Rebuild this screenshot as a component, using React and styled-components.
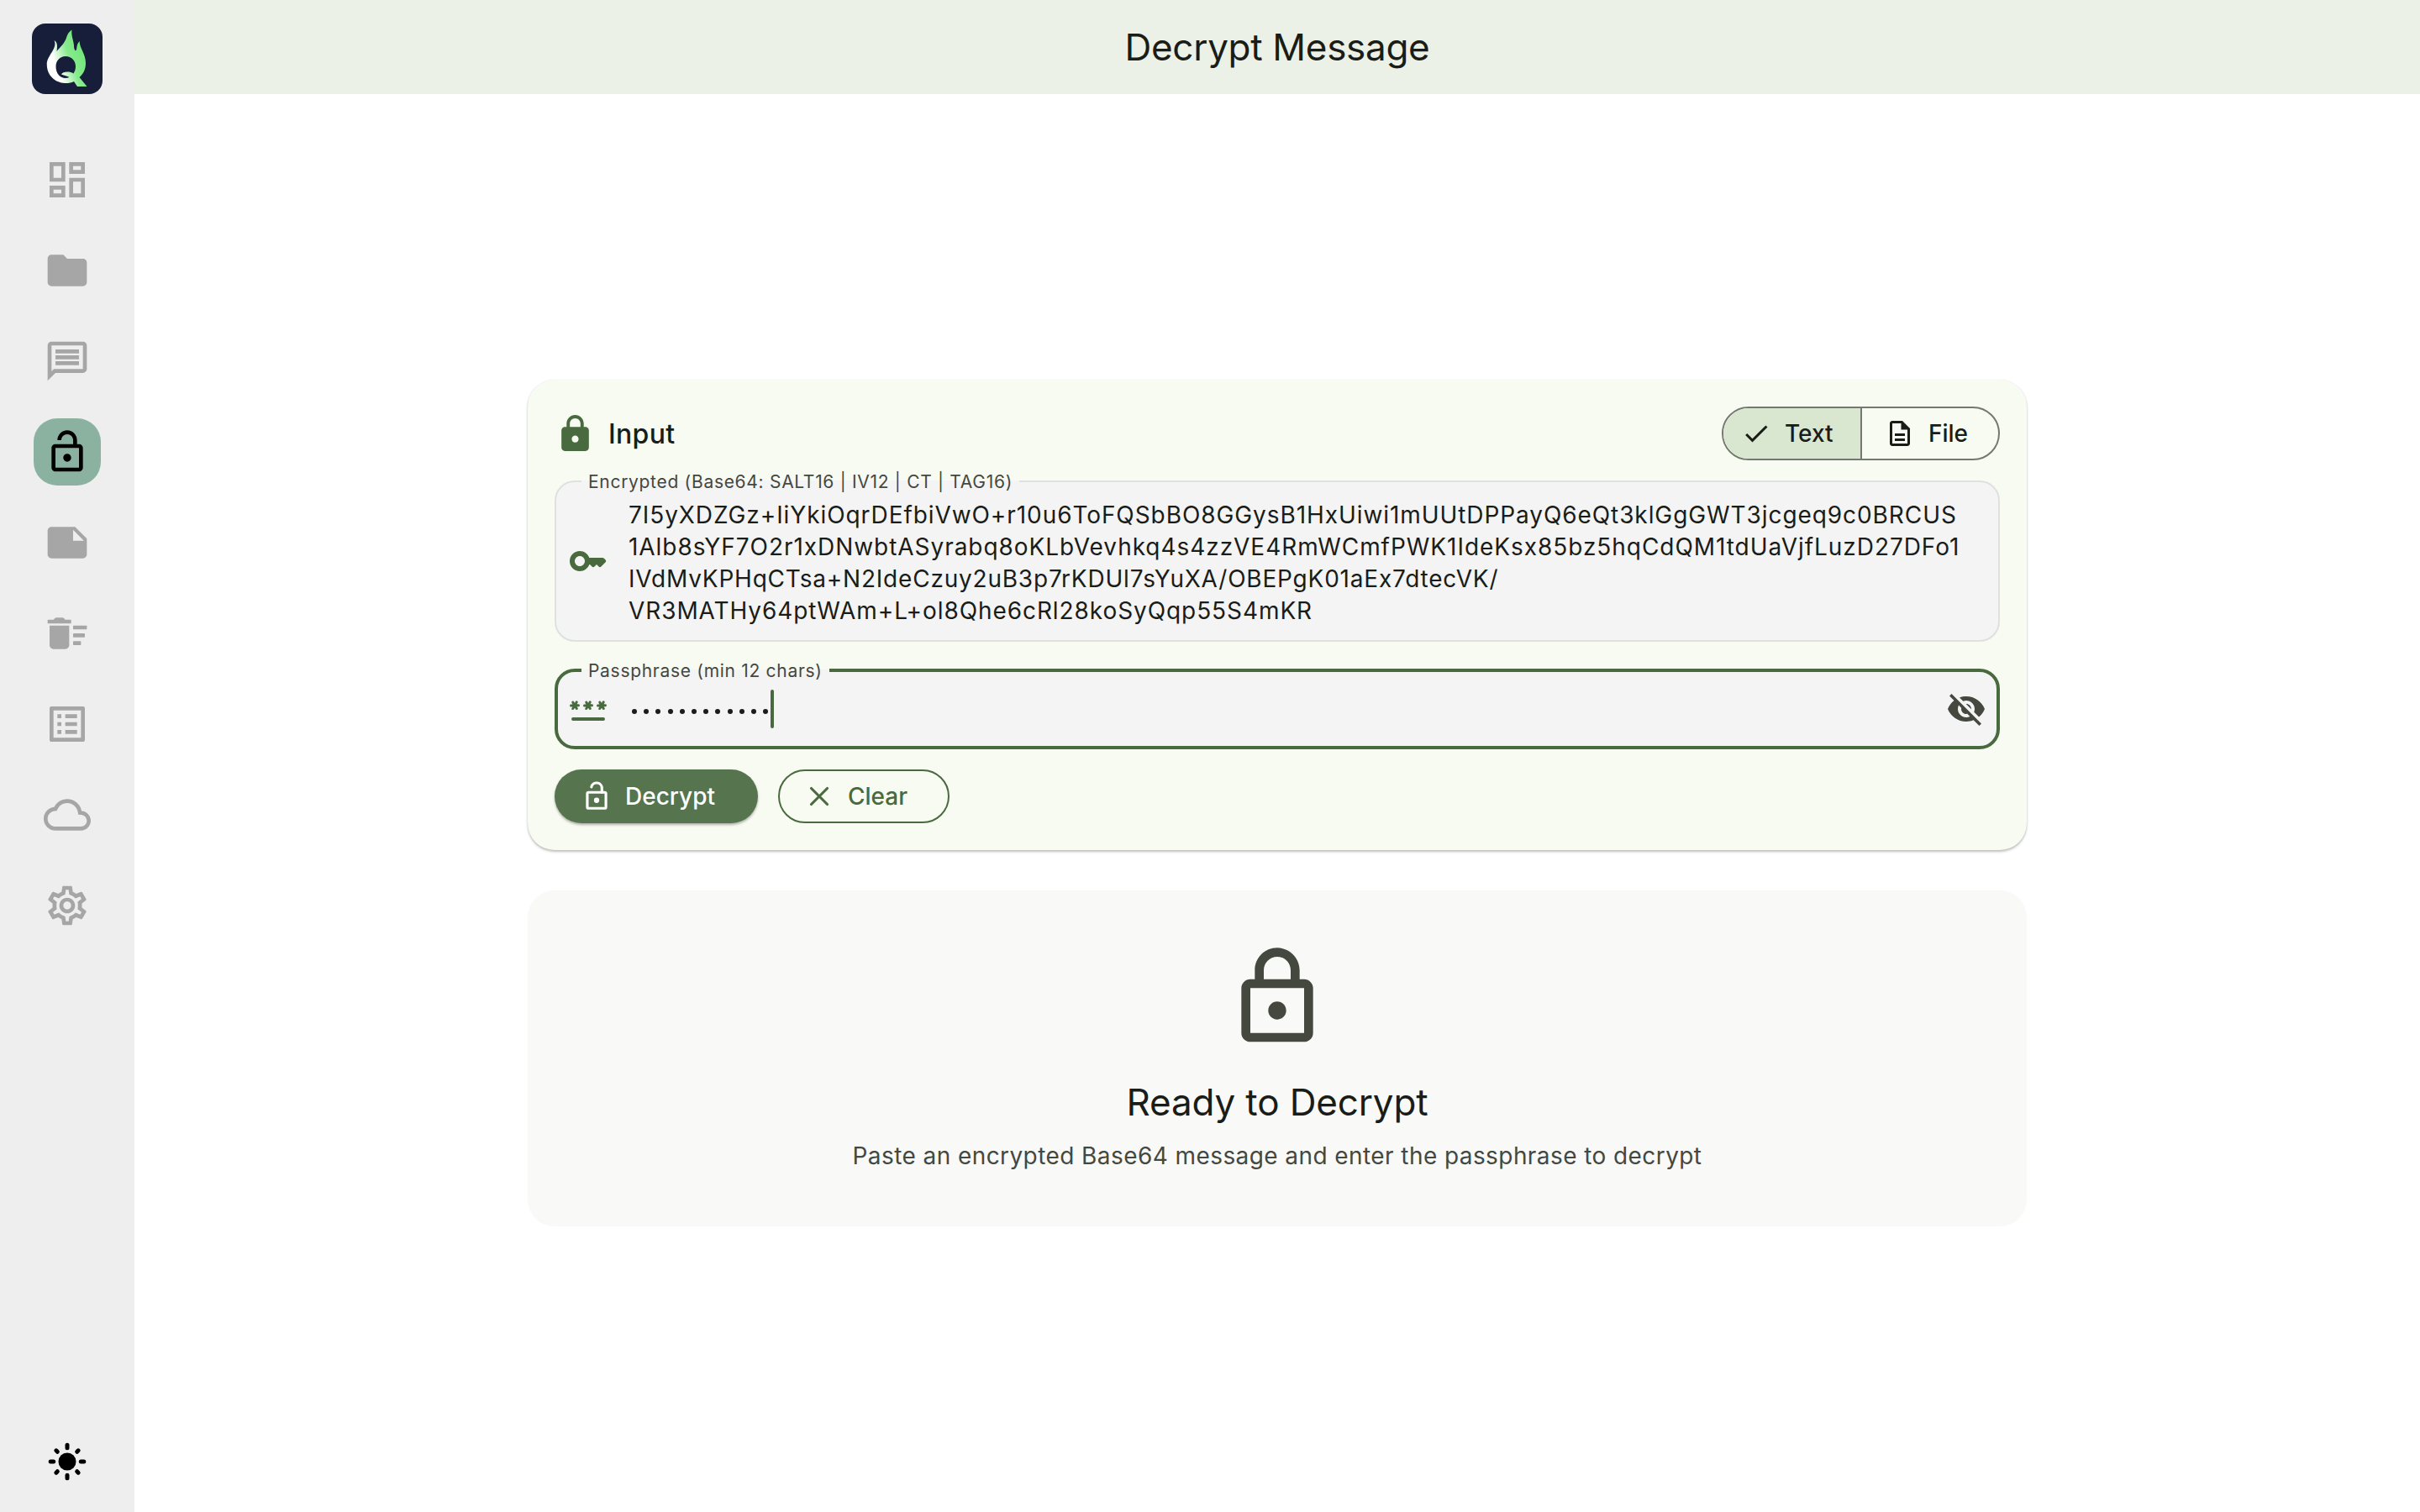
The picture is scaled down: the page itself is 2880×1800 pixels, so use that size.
import React from 'react'
import styled, { createGlobalStyle } from 'styled-components'
import {
  MdOutlineDashboard,
  MdFolder,
  MdOutlineMessage,
  MdOutlineLockOpen,
  MdNote,
  MdOutlineListAlt,
  MdOutlineCloud,
  MdOutlineSettings,
  MdLock,
  MdOutlineLock,
  MdOutlineDescription,
  MdVisibilityOff,
} from 'react-icons/md'

const navItems = [
  { name: 'dashboard', icon: MdOutlineDashboard },
  { name: 'files', icon: MdFolder },
  { name: 'messages', icon: MdOutlineMessage },
  { name: 'decrypt', icon: MdOutlineLockOpen, active: true },
  { name: 'notes', icon: MdNote },
  { name: 'shredder', icon: SweepIcon },
  { name: 'logs', icon: MdOutlineListAlt },
  { name: 'cloud', icon: MdOutlineCloud },
  { name: 'settings', icon: MdOutlineSettings },
]

const cipherLines = [
  {
    text: '7I5yXDZGz+IiYkiOqrDEfbiVwO+r10u6ToFQSbBO8GGysB1HxUiwi1mUUtDPPayQ6eQt3klGgGWT3jcgeq9c0BRCUS',
    tracking: 0.92,
  },
  {
    text: '1Alb8sYF7O2r1xDNwbtASyrabq8oKLbVevhkq4s4zzVE4RmWCmfPWK1IdeKsx85bz5hqCdQM1tdUaVjfLuzD27DFo1',
    tracking: 0.95,
  },
  { text: 'IVdMvKPHqCTsa+N2IdeCzuy2uB3p7rKDUl7sYuXA/OBEPgK01aEx7dtecVK/', tracking: 0.79 },
  { text: 'VR3MATHy64ptWAm+L+ol8Qhe6cRl28koSyQqp55S4mKR', tracking: 0.92 },
]

const App = () => {
  return (
    <Page>
      <GlobalStyle />
      <Sidebar>
        <Logo />
        <Nav>
          {navItems.map(({ name, icon: Icon, active }) => (
            <NavItem key={name} $active={active} aria-label={name}>
              <Icon size={56} />
            </NavItem>
          ))}
        </Nav>
        <ThemeToggle aria-label='theme'>
          <SunIcon />
        </ThemeToggle>
      </Sidebar>
      <Main>
        <Header>Decrypt Message</Header>
        <Content>
          <InputCard>
            <CardHead>
              <MdLock size={49} />
              <CardTitle>Input</CardTitle>
              <Segments>
                <Segment $selected>
                  <CheckIcon />
                  Text
                </Segment>
                <Segment>
                  <MdOutlineDescription size={36} />
                  File
                </Segment>
              </Segments>
            </CardHead>
            <Field>
              <FieldLabel>Encrypted (Base64: SALT16 | IV12 | CT | TAG16)</FieldLabel>
              <FieldBody>
                <KeyIcon />
                <Cipher>
                  {cipherLines.map(({ text, tracking }) => (
                    <CipherLine key={text} $tracking={tracking}>
                      {text}
                    </CipherLine>
                  ))}
                </Cipher>
              </FieldBody>
            </Field>
            <Field $focused>
              <FieldLabel $focused>Passphrase (min 12 chars)</FieldLabel>
              <FieldBody $focused>
                <PasswordIcon />
                <Dots>
                  {Array.from({ length: 12 }, (_, i) => (
                    <Dot key={i} />
                  ))}
                </Dots>
                <Caret />
                <Reveal size={48} />
              </FieldBody>
            </Field>
            <Actions>
              <Button $filled>
                <UnlockIcon />
                Decrypt
              </Button>
              <Button>
                <CloseIcon />
                Clear
              </Button>
            </Actions>
          </InputCard>
          <StatusCard>
            <MdOutlineLock size={128} />
            <StatusTitle>Ready to Decrypt</StatusTitle>
            <StatusText>Paste an encrypted Base64 message and enter the passphrase to decrypt</StatusText>
          </StatusCard>
        </Content>
      </Main>
    </Page>
  )
}

export default App

function Logo() {
  return (
    <LogoSvg viewBox='0 0 84 84'>
      <defs>
        <linearGradient id='flame' x1='20' y1='52' x2='62' y2='36' gradientUnits='userSpaceOnUse'>
          <stop offset='0.2' stopColor='#ffffff' />
          <stop offset='0.62' stopColor='#86ea8c' />
          <stop offset='1' stopColor='#74e77c' />
        </linearGradient>
      </defs>
      <rect width='84' height='84' rx='16' fill='#171e3a' />
      <path
        fill='url(#flame)'
        fillRule='evenodd'
        d='M47.5 7.5C46.5 14 49.5 20 50 26C50 29 50.5 31.5 52 32.5C54.5 30 52 25.5 56.8 21C56 28 64 36 64 47C64 55 61 60 56.5 64L65.5 75H54L50 69C46.5 70.6 43 71.2 39.5 71C27 70.6 17.8 61 17.8 49C17.5 38 31 30 26.5 20C30.5 22 30.5 27 29.5 33C34 28 39 23 41 17C42 12.5 44.5 9.5 47.5 7.5ZM40 39C33.5 39 28.5 44 28.5 51C28.5 55 29.5 58.5 32 61.5C35 65 40 66 44.5 64C42 62.5 39 62 35 60.5C36.5 57.5 44 56 49.5 59.5C51 57 52 54.5 52 51C52 44 47 39 40 39Z'
      />
    </LogoSvg>
  )
}

function SweepIcon({ size }) {
  return (
    <svg width={size} height={size} viewBox='0 0 24 24' fill='currentColor'>
      <rect x='15' y='16' width='4' height='2' rx='0.2' />
      <rect x='15' y='8' width='7' height='2' rx='0.2' />
      <rect x='15' y='12' width='6' height='2' rx='0.2' />
      <path d='M3 18c0 1.1.9 2 2 2h6c1.1 0 2-.9 2-2V8H3z' />
      <path d='M5 5 5.7 4.3Q6 4 6.4 4h3.2q.4 0 .7.3L11 5h2.7q.3 0 .3.3v1.4q0 .3-.3.3H2.3q-.3 0-.3-.3V5.300q0-.3.3-.3z' />
    </svg>
  )
}

function SunIcon() {
  const angles = [0, 45, 90, 135, 180, 225, 270, 315]
  return (
    <svg width='56' height='56' viewBox='-28 -28 56 56'>
      <circle r='10.5' />
      {angles.map((a) => (
        <line
          key={a}
          x1={a % 90 ? 16.5 : 16.3}
          x2={a % 90 ? 18.6 : 19.8}
          transform={`rotate(${a})`}
          stroke='#000'
          strokeWidth='5'
          strokeLinecap='round'
        />
      ))}
    </svg>
  )
}

function KeyIcon() {
  return (
    <FieldSvg viewBox='0 0 24 24'>
      <path d='M20.59 10h-7.94C11.83 7.67 9.61 6 7 6c-3.31 0-6 2.69-6 6s2.69 6 6 6c2.61 0 4.83-1.67 5.65-4H13l1.29 1.29c.39.39 1.02.39 1.41 0L17 14l1.29 1.29c.39.39 1.03.39 1.42 0l2.59-2.61c.39-.39.39-1.03-.01-1.42l-.99-.97c-.19-.19-.45-.29-.71-.29zM7 15c-1.65 0-3-1.35-3-3s1.35-3 3-3 3 1.35 3 3-1.35 3-3 3z' />
    </FieldSvg>
  )
}

function PasswordIcon() {
  const star =
    'M2.5 12.43c.36.21.82.08 1.03-.28l.47-.82.48.83c.21.36.67.48 1.03.28.36-.21.48-.66.28-1.02l-.49-.84h.95c.41 0 .75-.34.75-.75s-.34-.75-.75-.75H5.3l.47-.82c.21-.36.09-.82-.27-1.03a.764.764 0 0 0-1.03.28L4 8.47l-.47-.81c-.21-.36-.67-.48-1.03-.27-.36.2-.48.66-.27 1.02l.47.82h-.95c-.41-.01-.75.33-.75.74s.34.75.75.75h.95l-.48.83c-.2.36-.08.82.28 1.02z'
  return (
    <FieldSvg viewBox='0 0 24 24'>
      <rect x='2' y='17' width='20' height='2' rx='1' />
      <path d={star} />
      <path d={star} transform='translate(8)' />
      <path d={star} transform='translate(16)' />
    </FieldSvg>
  )
}

function CheckIcon() {
  return (
    <svg width='36' height='36' viewBox='0 0 24 24' fill='currentColor'>
      <path d='M9 16.17 4.83 12l-1.42 1.41L9 19 21 7l-1.41-1.41z' />
    </svg>
  )
}

function UnlockIcon() {
  return (
    <svg width='38' height='38' viewBox='0 0 24 24' fill='none' stroke='currentColor' strokeWidth='2'>
      <rect x='5' y='9' width='14' height='12' rx='1' />
      <path d='M16 9V6a4 4 0 0 0-7.9-1' strokeLinecap='round' />
      <circle cx='12' cy='15' r='2' fill='currentColor' stroke='none' />
    </svg>
  )
}

function CloseIcon() {
  return (
    <svg width='38' height='38' viewBox='0 0 24 24'>
      <path d='M6 6 18 18M18 6 6 18' stroke='currentColor' strokeWidth='2' strokeLinecap='round' />
    </svg>
  )
}

const GlobalStyle = createGlobalStyle`
  * {
    box-sizing: border-box;
  }
  body {
    margin: 0;
    background: #ffffff;
    font-family: Inter, sans-serif;
    color: #1a1c18;
  }
  svg {
    display: block;
    flex: none;
  }
`

const Page = styled.div`
  display: flex;
  width: 2880px;
  height: 1800px;
  overflow: hidden;
`

const Sidebar = styled.aside`
  display: flex;
  flex-direction: column;
  align-items: center;
  width: 160px;
  padding: 28px 0 32px;
  background-color: #eeeeee;
`

const LogoSvg = styled.svg`
  width: 84px;
  height: 84px;
`

const Nav = styled.nav`
  display: flex;
  flex-direction: column;
  gap: 28px;
  margin-top: 62px;
`

const NavItem = styled.a`
  display: flex;
  align-items: center;
  justify-content: center;
  width: 80px;
  height: 80px;
  border-radius: 28px;
  color: ${(props) => (props.$active ? '#000000' : '#a6a6a6')};
  background-color: ${(props) => (props.$active ? '#8bb2a0' : 'transparent')};
`

const ThemeToggle = styled.a`
  margin-top: auto;
`

const Main = styled.main`
  flex: 1;
  display: flex;
  flex-direction: column;
`

const Header = styled.header`
  display: flex;
  align-items: center;
  justify-content: center;
  height: 112px;
  background-color: #ebf1e6;
  font-size: 44px;
  letter-spacing: -0.3px;
`

const Content = styled.div`
  flex: 1;
  display: flex;
  flex-direction: column;
  align-items: center;
  padding-top: 340px;
  gap: 48px;
`

const InputCard = styled.section`
  width: 1784px;
  height: 560px;
  padding: 32px;
  border-radius: 32px;
  background-color: #f8fbf1;
  box-shadow: 0 2px 3px rgba(0, 0, 0, 0.26), 0 0 1px rgba(0, 0, 0, 0.08);
`

const CardHead = styled.div`
  display: flex;
  align-items: center;
  height: 64px;
  color: #486a3e;
`

const CardTitle = styled.h2`
  margin: 0 auto 0 15px;
  font-size: 32px;
  font-weight: 550;
  letter-spacing: 0.3px;
  color: #1a1c18;
`

const Segments = styled.div`
  display: flex;
  width: 331px;
  height: 64px;
  border: 2px solid #747970;
  border-radius: 32px;
  overflow: hidden;
`

const Segment = styled.div`
  display: flex;
  align-items: center;
  gap: 16px;
  width: ${(props) => (props.$selected ? '165px' : 'auto')};
  padding-left: ${(props) => (props.$selected ? '21px' : '27px')};
  border-right: ${(props) => (props.$selected ? '2px solid #747970' : 'none')};
  background-color: ${(props) => (props.$selected ? '#d9e7d0' : 'transparent')};
  color: #1a1c18;
  font-size: 28px;
  font-weight: 550;
`

const Field = styled.div`
  position: relative;
  margin-top: ${(props) => (props.$focused ? '32px' : '24px')};
  height: ${(props) => (props.$focused ? '96px' : '192px')};
  border: ${(props) => (props.$focused ? '4px solid #486a3e' : '2px solid #dfe0df')};
  border-radius: 24px;
  background-color: #f4f4f5;
`

const FieldLabel = styled.span`
  position: absolute;
  left: ${(props) => (props.$focused ? '28px' : '30px')};
  top: ${(props) => (props.$focused ? '-1px' : '0')};
  padding: 0 8px;
  transform: translateY(-50%);
  background: linear-gradient(#f8fbf1 calc(50% - 2px), #f4f4f5 calc(50% - 2px));
  font-size: 21px;
  line-height: 20px;
  letter-spacing: 0.7px;
  white-space: nowrap;
  color: #44483f;
`

const FieldBody = styled.div`
  display: flex;
  align-items: center;
  height: 100%;
  padding: ${(props) => (props.$focused ? '0 12px' : '0 14px')};
`

const FieldSvg = styled.svg`
  width: 48px;
  height: 48px;
  margin-right: 24px;
  fill: #486a3e;
`

const Cipher = styled.div`
  padding-top: 3px;
  font-size: 28px;
  line-height: 38px;
  white-space: nowrap;
`

const CipherLine = styled.div`
  letter-spacing: ${(props) => props.$tracking}px;
`

const Dots = styled.div`
  display: flex;
  gap: 8.2px;
  padding: 5px 3px 0 4px;
`

const Dot = styled.span`
  width: 6px;
  height: 6px;
  border-radius: 50%;
  background-color: #1a1c18;
`

const Caret = styled.span`
  width: 4px;
  height: 46px;
  border-radius: 2px;
  background-color: #486a3e;
`

const Reveal = styled(MdVisibilityOff)`
  margin-left: auto;
  color: #44483f;
`

const Actions = styled.div`
  display: flex;
  gap: 24px;
  margin-top: 24px;
`

const Button = styled.div`
  display: flex;
  align-items: center;
  gap: 15px;
  height: 64px;
  width: ${(props) => (props.$filled ? '242px' : '204px')};
  padding-left: ${(props) => (props.$filled ? '31px' : '28px')};
  border-radius: 32px;
  border: ${(props) => (props.$filled ? 'none' : '2px solid #486a3e')};
  background-color: ${(props) => (props.$filled ? '#56754e' : 'transparent')};
  box-shadow: ${(props) => (props.$filled ? '0 2px 3px rgba(0, 0, 0, 0.3)' : 'none')};
  color: ${(props) => (props.$filled ? '#ffffff' : '#486a3e')};
  font-size: 28px;
  font-weight: 550;
`

const StatusCard = styled.section`
  display: flex;
  flex-direction: column;
  align-items: center;
  width: 1784px;
  height: 400px;
  padding-top: 63px;
  border-radius: 32px;
  background-color: #f9f9f8;
  color: #44483f;
`

const StatusTitle = styled.h1`
  margin: 33px 0 0;
  font-size: 44px;
  line-height: 56px;
  font-weight: 400;
  letter-spacing: -0.15px;
  color: #1a1c18;
`

const StatusText = styled.p`
  margin: 16px 0 0;
  font-size: 28px;
  line-height: 40px;
  letter-spacing: 0.42px;
`
